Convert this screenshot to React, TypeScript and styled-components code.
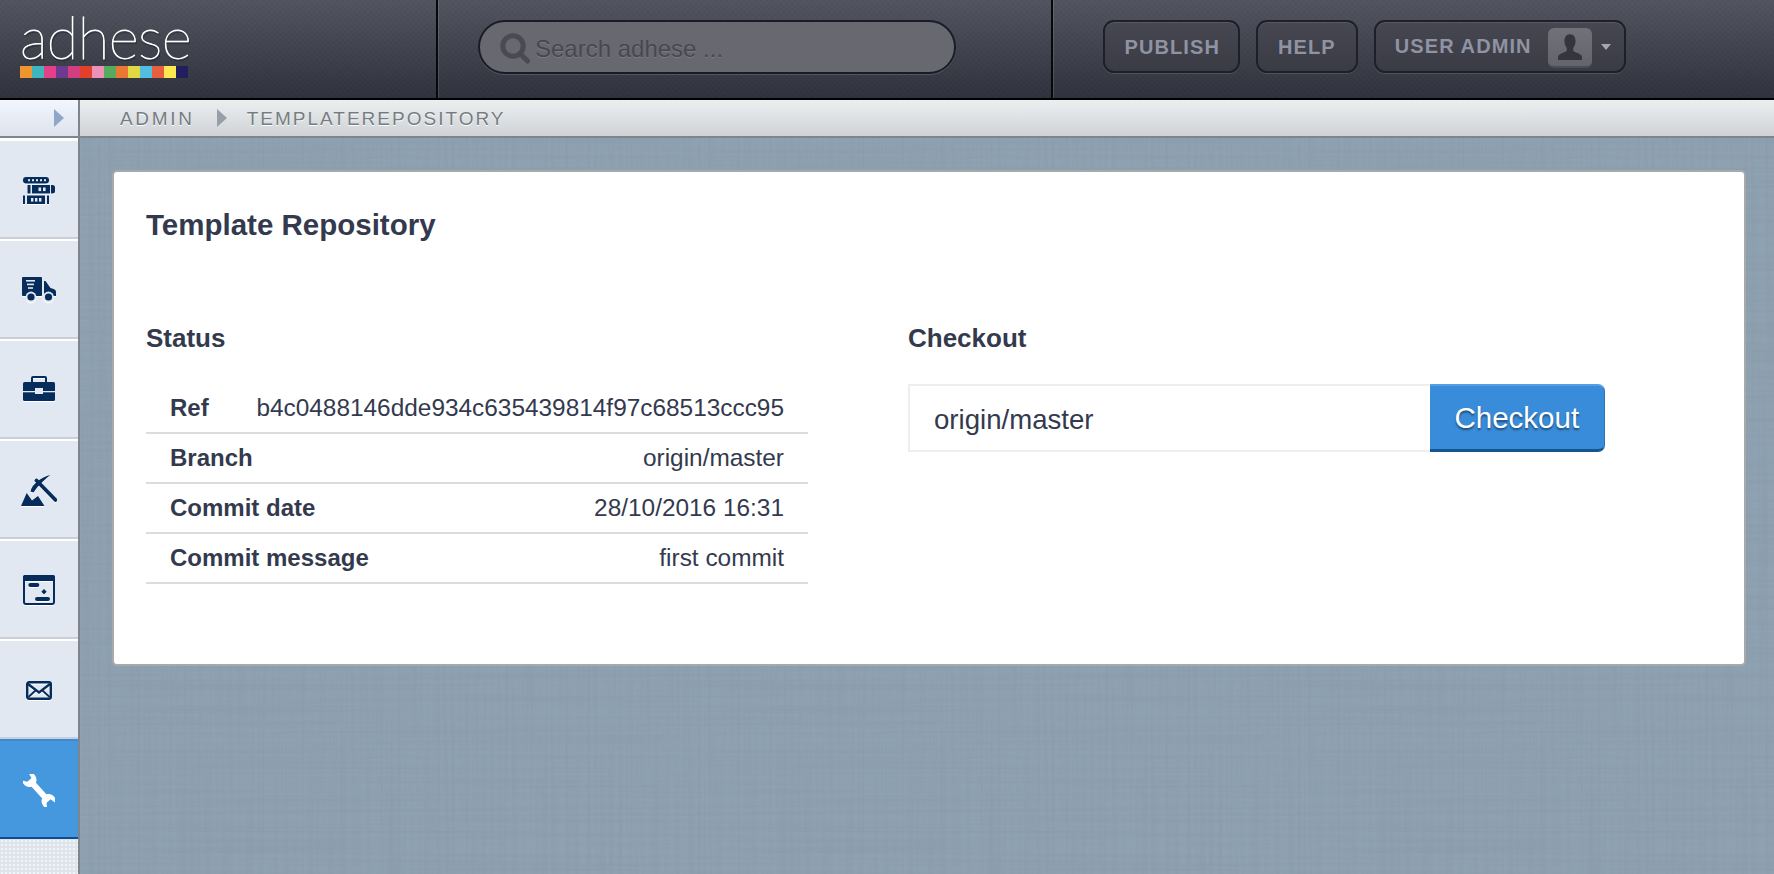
import React from 'react';
import styled, {createGlobalStyle} from 'styled-components';

const noise = (freq: string, seed: number, alpha: string) =>
  `<svg xmlns="http://www.w3.org/2000/svg" width="600" height="600"><filter id="n" x="0" y="0" width="100%" height="100%"><feTurbulence type="fractalNoise" baseFrequency="${freq}" numOctaves="3" seed="${seed}" stitchTiles="stitch"/><feColorMatrix values="0 0 0 0 0.25 0 0 0 0 0.32 0 0 0 0 0.38 0 0 0 ${alpha}"/></filter><rect width="600" height="600" filter="url(#n)"/></svg>`;

const linenA = `url("data:image/svg+xml,${encodeURIComponent(noise('0.004 0.28', 4, '1.1 -0.42'))}")`;
const linenB = `url("data:image/svg+xml,${encodeURIComponent(noise('0.28 0.004', 9, '1.1 -0.42'))}")`;

const GlobalStyle = createGlobalStyle`
  html, body {
    margin: 0;
    height: 100%;
    overflow: hidden;
  }
  body {
    font-family: "Liberation Sans", Arial, sans-serif;
    color: #343a4e;
  }
  * {
    box-sizing: border-box;
  }
`;

const Page = styled.div`
  display: flex;
  flex-direction: column;
  height: 874px;
  width: 1774px;
`;

const TopBar = styled.header`
  display: flex;
  height: 100px;
  flex: none;
  border-bottom: 2px solid #000;
  background:
    repeating-linear-gradient(45deg, rgba(255,255,255,.012) 0 2px, transparent 2px 4px),
    repeating-linear-gradient(-45deg, rgba(0,0,0,.025) 0 2px, transparent 2px 4px),
    linear-gradient(#52545f, #2f313c);
`;

const LogoCell = styled.div`
  width: 438px;
  padding: 8px 0 0 20px;
  border-right: 2px solid #08080c;
  box-shadow: 1px 0 0 rgba(255,255,255,.12);
`;

const LogoText = styled.div`
  font-family: Lato, "Open Sans", sans-serif;
  font-weight: 200;
  font-size: 58px;
  line-height: 58px;
  letter-spacing: -.6px;
  color: #fff;
  -webkit-text-stroke: .8px #fff;
  text-shadow: 1px 2px 1px rgba(0,0,0,.6);
  width: 168px;
  white-space: nowrap;
`;

const ColorBar = styled.div`
  display: flex;
  width: 168px;
`;

const Swatch = styled.span<{$color: string}>`
  width: 12px;
  height: 12px;
  background: ${p => p.$color};
`;

const SearchCell = styled.div`
  width: 615px;
  padding: 20px 0 0 40px;
  border-right: 2px solid #08080c;
  box-shadow: 1px 0 0 rgba(255,255,255,.12);
`;

const SearchBox = styled.label`
  display: flex;
  align-items: center;
  gap: 5px;
  width: 478px;
  height: 54px;
  padding: 3px 0 0 20px;
  border: 2px solid #1a1b25;
  border-radius: 27px;
  background: #686871;
  box-shadow: 0 1px 0 rgba(255,255,255,.14);
`;

const SearchInput = styled.input`
  flex: 1;
  min-width: 0;
  border: 0;
  outline: 0;
  background: none;
  font-family: inherit;
  font-size: 24px;
  padding: 0;
  &::placeholder {
    color: #47484f;
    opacity: 1;
    text-shadow: 0 1px 0 rgba(255,255,255,.14);
  }
`;

const Actions = styled.div`
  display: flex;
  gap: 16px;
  padding: 20px 0 0 50px;
`;

const ActionButton = styled.button`
  display: flex;
  align-items: center;
  height: 53px;
  padding: 2px 18.500px 0 19.500px;
  border: 2px solid #1e1f29;
  border-radius: 11px;
  background: linear-gradient(#464751, #3a3b45);
  box-shadow: inset 0 1px 0 rgba(255,255,255,.1), 0 1px 0 rgba(255,255,255,.12);
  font-family: inherit;
  font-weight: 700;
  font-size: 20px;
  letter-spacing: 1.1px;
  color: #8f93a2;
  white-space: nowrap;
`;

const HelpButton = styled(ActionButton)`
  padding: 2px 20px 0 19.500px;
`;

const UserButton = styled(ActionButton)`
  padding: 0 13px 0 19px;
`;

const Avatar = styled.span`
  display: flex;
  align-items: flex-end;
  justify-content: center;
  width: 44px;
  height: 40px;
  margin: 2px 0 0 16px;
  border-radius: 6px;
  background: linear-gradient(#71717a, #64646d);
  border-bottom: 2px solid #4b4d5e;
  padding-bottom: 3px;
`;

const Caret = styled.span`
  width: 0;
  height: 0;
  margin-left: 9px;
  border-left: 5px solid transparent;
  border-right: 5px solid transparent;
  border-top: 6px solid #a4a7b0;
`;

const SubBar = styled.div`
  display: flex;
  height: 38px;
  flex: none;
  border-bottom: 2px solid #7f858c;
  background: linear-gradient(#ebeff0, #d0d3d6);
`;

const ToggleCell = styled.div`
  display: flex;
  align-items: center;
  justify-content: flex-end;
  width: 80px;
  padding-right: 14px;
  border-right: 2px solid #7f858c;
  background: linear-gradient(#f2f6fd, #dde3ed);
`;

const Arrow = styled.span<{$color: string}>`
  width: 0;
  height: 0;
  border-top: 9px solid transparent;
  border-bottom: 9px solid transparent;
  border-left: 10px solid ${p => p.$color};
`;

const Crumbs = styled.nav`
  display: flex;
  align-items: center;
  padding: 2px 0 0 40px;
  font-size: 19px;
  letter-spacing: 2px;
  color: #767c83;
  text-shadow: 0 1px 0 #fff;
`;

const RootCrumb = styled.span`
  letter-spacing: 2.7px;
`;

const CrumbArrow = styled.span`
  display: flex;
  margin: -2px 20px 0 22px;
`;

const Body = styled.div`
  display: flex;
  flex: 1;
  min-height: 0;
`;

const Sidebar = styled.aside`
  display: flex;
  flex-direction: column;
  width: 80px;
  flex: none;
  padding-top: 1px;
  border-right: 2px solid #7f858c;
  background: #fff;
`;

const NavItem = styled.a<{$active?: boolean}>`
  display: flex;
  align-items: center;
  justify-content: center;
  height: 100px;
  flex: none;
  padding-top: 2px;
  background: ${p => (p.$active ? '#4597de' : '#e2e8f1')};
  border-top: 2px solid ${p => (p.$active ? '#3f8bd2' : '#fff')};
  border-bottom: 2px solid ${p => (p.$active ? '#0c4e95' : '#c9ced8')};
  svg {
    display: block;
    filter: ${p => (p.$active ? 'none' : 'drop-shadow(0 1px 0 #fff)')};
  }
`;

const SidebarRest = styled.div`
  flex: 1;
  background-color: #dfe3ea;
  background-image: radial-gradient(rgba(255,255,255,.6) 1px, transparent 1px);
  background-size: 4px 4px;
`;

const Main = styled.main`
  flex: 1;
  padding: 32px 28px 0 32px;
  background-color: #8ea2b3;
  background-image: ${linenA}, ${linenB};
`;

const Panel = styled.section`
  height: 496px;
  padding: 36px 32px 0;
  background: #fff;
  border: 2px solid #a6aaad;
  border-radius: 5px;
`;

const Title = styled.h1`
  margin: 0;
  font-size: 29.500px;
  line-height: 34px;
  font-weight: 700;
`;

const Columns = styled.div`
  display: grid;
  grid-template-columns: 662px 697px;
  column-gap: 100px;
  margin-top: 81px;
`;

const Heading = styled.h2`
  margin: 0 0 31px;
  font-size: 26px;
  line-height: 30px;
  font-weight: 700;
`;

const StatusTable = styled.div`
  margin-top: 1px;
`;

const Row = styled.div`
  display: flex;
  justify-content: space-between;
  align-items: center;
  height: 50px;
  border-bottom: 2px solid #dcdcdc;
  padding: 0 24px;
  font-size: 24px;
`;

const Label = styled.span`
  font-weight: 700;
`;

const Value = styled.span`
  font-size: 24.400px;
`;

const CheckoutForm = styled.div`
  display: flex;
  height: 68px;
`;

const BranchInput = styled.input`
  width: 523px;
  height: 100%;
  padding: 4px 24px 0;
  border: 2px solid #eee;
  border-right: 0;
  outline: 0;
  font-family: inherit;
  font-size: 27.600px;
  color: #343a4e;
`;

const CheckoutButton = styled.button`
  width: 176px;
  height: 100%;
  padding: 0;
  border: 0;
  border-top: 2px solid #559fe3;
  border-bottom: 3px solid #14568f;
  border-right: 1px solid #2a74b8;
  border-radius: 0 7px 7px 0;
  background: #398cd9;
  font-family: inherit;
  font-size: 29.500px;
  color: #fff;
  text-shadow: 0 2px 2px rgba(0,0,0,.45);
`;

const navy = '#062c5c';

const ServersIcon = () => (
  <svg width="32" height="27" viewBox="0 0 32 27" fill={navy}>
    <rect width="26" height="6.5" rx="3" />
    <g fill="#e2e8f1">
      {[5, 9, 13, 17, 21].map(x => <rect key={x} x={x} y="2.2" width="2" height="2" />)}
    </g>
    <rect x="4.5" y="8" width="3" height="8.5" />
    <rect x="9" y="8" width="18" height="8.5" />
    <path d="M28 8h1.5a2.5 2.5 0 0 1 2.5 2.5v3.5a2.5 2.5 0 0 1-2.5 2.5H28z" />
    <g fill="#e2e8f1">
      <rect x="15.5" y="10.5" width="2.6" height="3.6" />
      <rect x="20" y="10.5" width="2.6" height="3.6" />
    </g>
    <rect y="18.5" width="2" height="8.5" />
    <rect x="4" y="18.5" width="18" height="8.5" />
    <rect x="24" y="18.5" width="2" height="8.5" />
    <g fill="#e2e8f1">
      <rect x="8" y="21" width="2.4" height="3.6" />
      <rect x="12" y="21" width="2.4" height="3.6" />
      <rect x="16" y="21" width="2.4" height="3.6" />
    </g>
  </svg>
);

const TruckIcon = () => (
  <svg width="34" height="26" viewBox="0 0 34 26" fill={navy}>
    <rect width="20" height="19" rx="1" />
    <g fill="#e2e8f1">
      <rect x="4" y="3" width="9" height="1.6" />
      <rect x="5" y="6.6" width="7" height="1.6" />
      <rect x="6" y="10.2" width="5" height="1.6" />
    </g>
    <path d="M22 4h1.5l5 7 3 1a3 3 0 0 1 2.5 3v4H22z" />
    <circle cx="9" cy="20" r="5.4" fill="#e2e8f1" />
    <circle cx="9" cy="20" r="3.6" />
    <circle cx="26.5" cy="20" r="5.4" fill="#e2e8f1" />
    <circle cx="26.5" cy="20" r="3.6" />
  </svg>
);

const CaseIcon = () => (
  <svg width="32" height="29" viewBox="0 0 32 29" fill={navy}>
    <path d="M8 7V2a2 2 0 0 1 2-2h12a2 2 0 0 1 2 2v5h-2V2H10v5z" />
    <rect y="6" width="32" height="19" rx="1.5" />
    <rect y="15" width="32" height="1.3" fill="#e2e8f1" />
    <rect x="12" y="12" width="8" height="6" fill="#e2e8f1" />
  </svg>
);

const MiningIcon = () => (
  <svg width="36" height="31" viewBox="0 0 36 31" fill={navy}>
    <path d="M0 31 5.700 18l5.300 7.500 6-4.500L23.500 31z" />
    <path d="M9.500 16.500C11 9 20 2.500 29.500 0 23 5 18 9.500 12.500 17.500z" />
    <path d="M15.500 5.500 34.500 25" stroke={navy} strokeWidth="3.800" strokeLinecap="round" />
  </svg>
);

const WindowIcon = () => (
  <svg width="32" height="30" viewBox="0 0 32 30" fill={navy}>
    <rect x="1" y="1" width="30" height="28" rx="2" fill="none" stroke={navy} strokeWidth="2" />
    <rect width="32" height="6" rx="2" />
    <rect x="5.300" y="8" width="11" height="4" rx="2" />
    <rect x="12" y="22" width="15" height="4" rx="2" />
    <path d="M21 14l2.700 2.700L21 19.400l-2.700-2.700z" />
  </svg>
);

const MailIcon = () => (
  <svg width="26" height="19" viewBox="0 0 26 19" fill="none" stroke={navy}>
    <rect x="1.200" y="1.200" width="23.600" height="16.600" rx="2" strokeWidth="2.400" />
    <path d="M2 3l11 8.500L24 3" strokeWidth="2.400" />
    <path d="M2.500 16 9.500 9.500M23.500 16l-7-6.500" strokeWidth="1.800" />
  </svg>
);

const WrenchIcon = () => (
  <svg width="32" height="33" viewBox="0 0 32 33" fill="#fff">
    <path
      transform="translate(16 16.500) rotate(48) scale(.92)"
      d="M-22.800-4.500L-15.500-3V3L-20.500 6.500A8.500 8.500 0 0 0-8.500 3.200H8.500A8.500 8.500 0 0 0 20.500 6.500L15.500 3V-3L22.800-4.500A8.500 8.500 0 0 0 8.500-3.200H-8.500A8.500 8.500 0 0 0-22.800-4.500Z"
    />
  </svg>
);

const SearchGlass = () => (
  <svg width="30" height="31" viewBox="0 0 30 31" fill="none" stroke="#494a53" style={{flex: 'none'}}>
    <circle cx="13" cy="13" r="10.200" strokeWidth="5" />
    <path d="M20.500 21 27.500 28" strokeWidth="5" strokeLinecap="round" />
  </svg>
);

const Silhouette = () => (
  <svg width="24" height="30" viewBox="0 0 26 30" fill="#34353e">
    <path d="M13 0c4 0 6 3 6 7.500 0 3-1 5.500-2.500 7.500v3c0 1.500 9.500 3 9.500 6.500V28H0v-3.500C0 21 9.500 19.500 9.500 18v-3C8 13 7 10.500 7 7.500 7 3 9 0 13 0z" />
  </svg>
);

const logoColors = ['#f0962e', '#3fb5bc', '#e43f87', '#6c3a90', '#d23f80', '#e2402a', '#ec91b8', '#56ab5d', '#ea7733', '#dfd944', '#53bde0', '#e6603f', '#fce94f', '#221f5e'];

const statusRows = [
  ['Ref', 'b4c0488146dde934c635439814f97c68513ccc95'],
  ['Branch', 'origin/master'],
  ['Commit date', '28/10/2016 16:31'],
  ['Commit message', 'first commit'],
];

function App() {
  return (
    <Page>
      <GlobalStyle />
      <TopBar>
        <LogoCell>
          <LogoText>adhese</LogoText>
          <ColorBar>
            {logoColors.map(c => <Swatch key={c} $color={c} />)}
          </ColorBar>
        </LogoCell>
        <SearchCell>
          <SearchBox>
            <SearchGlass />
            <SearchInput placeholder="Search adhese ..." />
          </SearchBox>
        </SearchCell>
        <Actions>
          <ActionButton>PUBLISH</ActionButton>
          <HelpButton>HELP</HelpButton>
          <UserButton>
            USER ADMIN
            <Avatar><Silhouette /></Avatar>
            <Caret />
          </UserButton>
        </Actions>
      </TopBar>
      <SubBar>
        <ToggleCell><Arrow $color="#8fa6c9" /></ToggleCell>
        <Crumbs>
          <RootCrumb>ADMIN</RootCrumb>
          <CrumbArrow><Arrow $color="#969ea9" /></CrumbArrow>
          TEMPLATEREPOSITORY
        </Crumbs>
      </SubBar>
      <Body>
        <Sidebar>
          <NavItem><ServersIcon /></NavItem>
          <NavItem><TruckIcon /></NavItem>
          <NavItem><CaseIcon /></NavItem>
          <NavItem><MiningIcon /></NavItem>
          <NavItem><WindowIcon /></NavItem>
          <NavItem><MailIcon /></NavItem>
          <NavItem $active><WrenchIcon /></NavItem>
          <SidebarRest />
        </Sidebar>
        <Main>
          <Panel>
            <Title>Template Repository</Title>
            <Columns>
              <div>
                <Heading>Status</Heading>
                <StatusTable>
                  {statusRows.map(([label, value]) => (
                    <Row key={label}>
                      <Label>{label}</Label>
                      <Value>{value}</Value>
                    </Row>
                  ))}
                </StatusTable>
              </div>
              <div>
                <Heading>Checkout</Heading>
                <CheckoutForm>
                  <BranchInput defaultValue="origin/master" />
                  <CheckoutButton>Checkout</CheckoutButton>
                </CheckoutForm>
              </div>
            </Columns>
          </Panel>
        </Main>
      </Body>
    </Page>
  );
}

export default App;
